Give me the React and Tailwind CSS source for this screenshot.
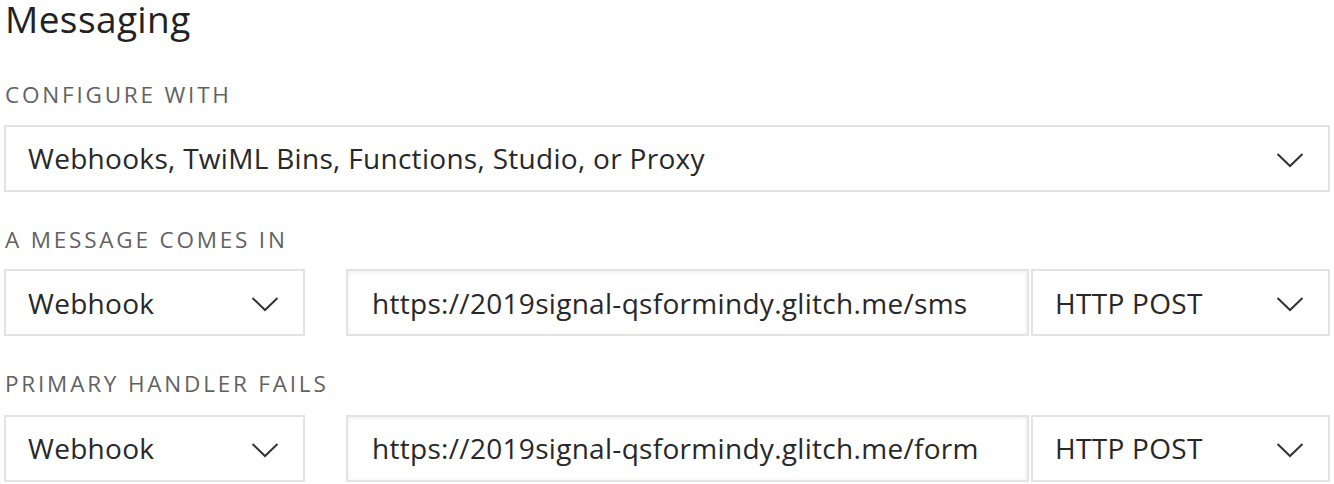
import React from "react";

const font = { fontFamily: "'Open Sans', Lato, sans-serif" };

function Chevron() {
  return (
    <svg width="28" height="16" viewBox="0 0 28 16" className="shrink-0 mt-[3px]">
      <polyline points="1.5,2 14,14 26.5,2" fill="none" stroke="#333" strokeWidth="2" />
    </svg>
  );
}

function Select({ value, className = "" }) {
  return (
    <div className={"h-[67px] border-2 border-[#e3e3e3] bg-white flex items-center justify-between pl-[22px] pr-[24px] " + className}>
      <span className="text-[28px] tracking-[0.3px] text-[#282828] whitespace-nowrap">{value}</span>
      <Chevron />
    </div>
  );
}

function Label({ children, className = "" }) {
  return (
    <div className={"text-[22.5px] tracking-[2.8px] uppercase text-[#626262] leading-none px-[1px] " + className}>
      {children}
    </div>
  );
}

function HandlerRow({ url, className = "" }) {
  return (
    <div className={"flex items-stretch " + className}>
      <Select value="Webhook" className="w-[301px]" />
      <div className="ml-[41px] w-[683px] h-[67px] border-2 border-[#e3e3e3] bg-white shadow-[inset_0_1px_4px_rgba(0,0,0,0.08)] flex items-center pl-[24px] pr-[2px] overflow-hidden">
        <span className="text-[28px] tracking-[0.3px] text-[#282828] whitespace-nowrap">{url}</span>
      </div>
      <Select value="HTTP POST" className="ml-[2px] flex-1 pl-[20px]" />
    </div>
  );
}

export default function App() {
  return (
    <div className="w-[1334px] h-[484px] bg-white px-[4px] overflow-hidden" style={font}>
      <h1 className="text-[37px] tracking-[0.4px] text-[#222] leading-[38px] px-[1px]">Messaging</h1>
      <Label className="mt-[46px]">Configure with</Label>
      <Select value="Webhooks, TwiML Bins, Functions, Studio, or Proxy" className="mt-[18px] w-[1326px]" />
      <Label className="mt-[37px]">A message comes in</Label>
      <HandlerRow className="mt-[18px]" url="https://2019signal-qsformindy.glitch.me/sms" />
      <Label className="mt-[37px]">Primary handler fails</Label>
      <HandlerRow className="mt-[19px]" url="https://2019signal-qsformindy.glitch.me/form" />
    </div>
  );
}
